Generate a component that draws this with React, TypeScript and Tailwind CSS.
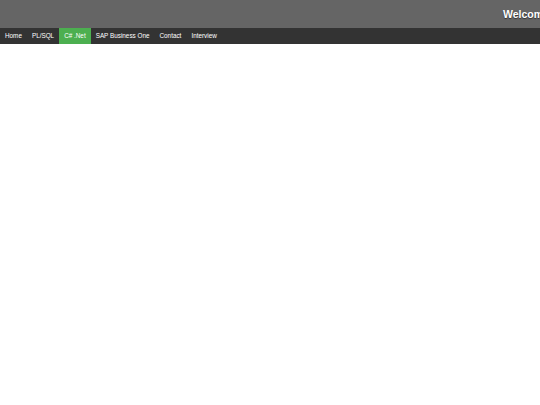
const links = ['Home', 'PL/SQL', 'C# .Net', 'SAP Business One', 'Contact', 'Interview']

export default function App() {
    const active = 'C# .Net'
    return (
        <div className="min-h-[405px] w-[540px] overflow-hidden bg-white font-['Liberation_Sans',Arial,sans-serif]">
            <header className="flex h-[28px] items-center overflow-hidden bg-[#656565] pt-[2px]">
                <h1 className="ml-[503px] shrink-0 whitespace-nowrap text-[10.5px] font-bold text-white [text-shadow:0_1px_1px_#333]">
                    Welcome to my blog
                </h1>
            </header>
            <nav className="flex h-[15.5px] bg-[#333333]">
                {links.map((link) => (
                    <a
                        key={link}
                        href="#"
                        className={`flex items-center px-[5px] text-[6.35px] text-white ${link === active ? 'bg-[#4caf50]' : ''}`}
                    >
                        {link}
                    </a>
                ))}
            </nav>
        </div>
    )
}
